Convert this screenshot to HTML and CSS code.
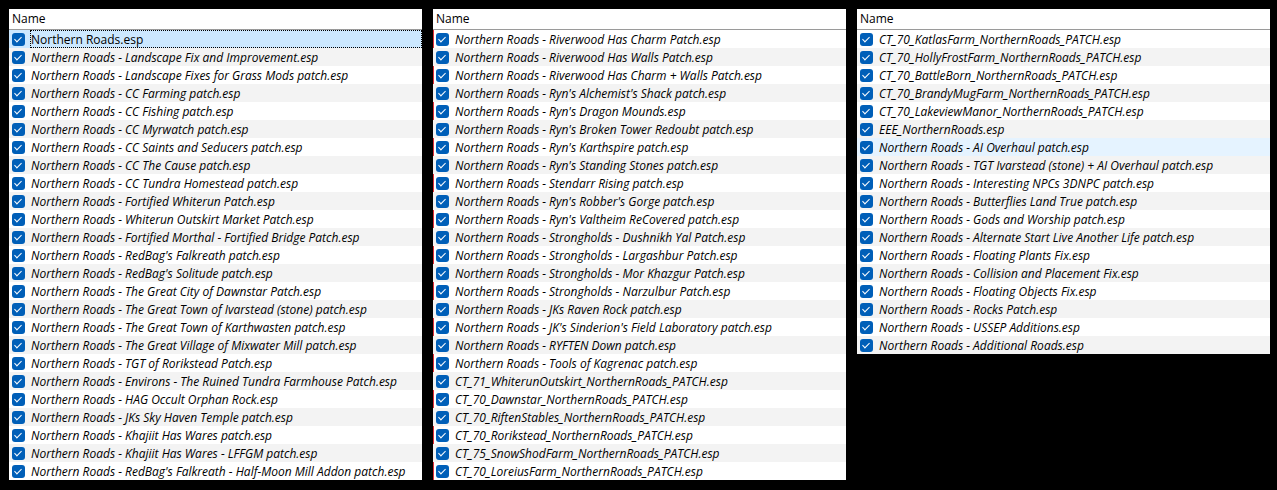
FILE: index.html
```html
<!doctype html>
<html>
<head>
<meta charset="utf-8">
<title>Plugins</title>
<link rel="stylesheet" href="styles.css">
</head>
<body>
<div class="wrap">
    <div class="panel">
        <div class="head">Name</div>
        <ul class="list">
            <li class="sel"><span class="cb"></span><span class="name plain">Northern Roads.esp</span></li>
            <li><span class="cb"></span><span class="name">Northern Roads - Landscape Fix and Improvement.esp</span></li>
            <li><span class="cb"></span><span class="name">Northern Roads - Landscape Fixes for Grass Mods patch.esp</span></li>
            <li><span class="cb"></span><span class="name">Northern Roads - CC Farming patch.esp</span></li>
            <li><span class="cb"></span><span class="name">Northern Roads - CC Fishing patch.esp</span></li>
            <li><span class="cb"></span><span class="name">Northern Roads - CC Myrwatch patch.esp</span></li>
            <li><span class="cb"></span><span class="name">Northern Roads - CC Saints and Seducers patch.esp</span></li>
            <li><span class="cb"></span><span class="name">Northern Roads - CC The Cause patch.esp</span></li>
            <li><span class="cb"></span><span class="name">Northern Roads - CC Tundra Homestead patch.esp</span></li>
            <li><span class="cb"></span><span class="name">Northern Roads - Fortified Whiterun Patch.esp</span></li>
            <li><span class="cb"></span><span class="name">Northern Roads - Whiterun Outskirt Market Patch.esp</span></li>
            <li><span class="cb"></span><span class="name">Northern Roads - Fortified Morthal - Fortified Bridge Patch.esp</span></li>
            <li><span class="cb"></span><span class="name">Northern Roads - RedBag's Falkreath patch.esp</span></li>
            <li><span class="cb"></span><span class="name">Northern Roads - RedBag's Solitude patch.esp</span></li>
            <li><span class="cb"></span><span class="name">Northern Roads - The Great City of Dawnstar Patch.esp</span></li>
            <li><span class="cb"></span><span class="name">Northern Roads - The Great Town of Ivarstead (stone) patch.esp</span></li>
            <li><span class="cb"></span><span class="name">Northern Roads - The Great Town of Karthwasten patch.esp</span></li>
            <li><span class="cb"></span><span class="name">Northern Roads - The Great Village of Mixwater Mill patch.esp</span></li>
            <li><span class="cb"></span><span class="name">Northern Roads - TGT of Rorikstead Patch.esp</span></li>
            <li><span class="cb"></span><span class="name">Northern Roads - Environs - The Ruined Tundra Farmhouse Patch.esp</span></li>
            <li><span class="cb"></span><span class="name">Northern Roads - HAG Occult Orphan Rock.esp</span></li>
            <li><span class="cb"></span><span class="name">Northern Roads - JKs Sky Haven Temple patch.esp</span></li>
            <li><span class="cb"></span><span class="name">Northern Roads - Khajiit Has Wares patch.esp</span></li>
            <li><span class="cb"></span><span class="name">Northern Roads - Khajiit Has Wares - LFFGM patch.esp</span></li>
            <li><span class="cb"></span><span class="name">Northern Roads - RedBag's Falkreath - Half-Moon Mill Addon patch.esp</span></li>
        </ul>
    </div>
    <div class="panel">
        <div class="head">Name</div>
        <ul class="list focus">
            <li><span class="cb"></span><span class="name">Northern Roads - Riverwood Has Charm Patch.esp</span></li>
            <li><span class="cb"></span><span class="name">Northern Roads - Riverwood Has Walls Patch.esp</span></li>
            <li><span class="cb"></span><span class="name">Northern Roads - Riverwood Has Charm + Walls Patch.esp</span></li>
            <li><span class="cb"></span><span class="name">Northern Roads - Ryn's Alchemist's Shack patch.esp</span></li>
            <li><span class="cb"></span><span class="name">Northern Roads - Ryn's Dragon Mounds.esp</span></li>
            <li><span class="cb"></span><span class="name">Northern Roads - Ryn's Broken Tower Redoubt patch.esp</span></li>
            <li><span class="cb"></span><span class="name">Northern Roads - Ryn's Karthspire patch.esp</span></li>
            <li><span class="cb"></span><span class="name">Northern Roads - Ryn's Standing Stones patch.esp</span></li>
            <li><span class="cb"></span><span class="name">Northern Roads - Stendarr Rising patch.esp</span></li>
            <li><span class="cb"></span><span class="name">Northern Roads - Ryn's Robber's Gorge patch.esp</span></li>
            <li><span class="cb"></span><span class="name">Northern Roads - Ryn's Valtheim ReCovered patch.esp</span></li>
            <li><span class="cb"></span><span class="name">Northern Roads - Strongholds - Dushnikh Yal Patch.esp</span></li>
            <li><span class="cb"></span><span class="name">Northern Roads - Strongholds - Largashbur Patch.esp</span></li>
            <li><span class="cb"></span><span class="name">Northern Roads - Strongholds - Mor Khazgur Patch.esp</span></li>
            <li><span class="cb"></span><span class="name">Northern Roads - Strongholds - Narzulbur Patch.esp</span></li>
            <li><span class="cb"></span><span class="name">Northern Roads - JKs Raven Rock patch.esp</span></li>
            <li><span class="cb"></span><span class="name">Northern Roads - JK's Sinderion's Field Laboratory patch.esp</span></li>
            <li><span class="cb"></span><span class="name">Northern Roads - RYFTEN Down patch.esp</span></li>
            <li><span class="cb"></span><span class="name">Northern Roads - Tools of Kagrenac patch.esp</span></li>
            <li><span class="cb"></span><span class="name">CT_71_WhiterunOutskirt_NorthernRoads_PATCH.esp</span></li>
            <li><span class="cb"></span><span class="name">CT_70_Dawnstar_NorthernRoads_PATCH.esp</span></li>
            <li><span class="cb"></span><span class="name">CT_70_RiftenStables_NorthernRoads_PATCH.esp</span></li>
            <li><span class="cb"></span><span class="name">CT_70_Rorikstead_NorthernRoads_PATCH.esp</span></li>
            <li><span class="cb"></span><span class="name">CT_75_SnowShodFarm_NorthernRoads_PATCH.esp</span></li>
            <li><span class="cb"></span><span class="name">CT_70_LoreiusFarm_NorthernRoads_PATCH.esp</span></li>
        </ul>
    </div>
    <div class="panel">
        <div class="head">Name</div>
        <ul class="list">
            <li><span class="cb"></span><span class="name">CT_70_KatlasFarm_NorthernRoads_PATCH.esp</span></li>
            <li><span class="cb"></span><span class="name">CT_70_HollyFrostFarm_NorthernRoads_PATCH.esp</span></li>
            <li><span class="cb"></span><span class="name">CT_70_BattleBorn_NorthernRoads_PATCH.esp</span></li>
            <li><span class="cb"></span><span class="name">CT_70_BrandyMugFarm_NorthernRoads_PATCH.esp</span></li>
            <li><span class="cb"></span><span class="name">CT_70_LakeviewManor_NorthernRoads_PATCH.esp</span></li>
            <li><span class="cb"></span><span class="name">EEE_NorthernRoads.esp</span></li>
            <li class="hover"><span class="cb"></span><span class="name">Northern Roads - AI Overhaul patch.esp</span></li>
            <li><span class="cb"></span><span class="name">Northern Roads - TGT Ivarstead (stone) + AI Overhaul patch.esp</span></li>
            <li><span class="cb"></span><span class="name">Northern Roads - Interesting NPCs 3DNPC patch.esp</span></li>
            <li><span class="cb"></span><span class="name">Northern Roads - Butterflies Land True patch.esp</span></li>
            <li><span class="cb"></span><span class="name">Northern Roads - Gods and Worship patch.esp</span></li>
            <li><span class="cb"></span><span class="name">Northern Roads - Alternate Start Live Another Life patch.esp</span></li>
            <li><span class="cb"></span><span class="name">Northern Roads - Floating Plants Fix.esp</span></li>
            <li><span class="cb"></span><span class="name">Northern Roads - Collision and Placement Fix.esp</span></li>
            <li><span class="cb"></span><span class="name">Northern Roads - Floating Objects Fix.esp</span></li>
            <li><span class="cb"></span><span class="name">Northern Roads - Rocks Patch.esp</span></li>
            <li><span class="cb"></span><span class="name">Northern Roads - USSEP Additions.esp</span></li>
            <li><span class="cb"></span><span class="name">Northern Roads - Additional Roads.esp</span></li>
        </ul>
    </div>
</div>
</body>
</html>
```
FILE: styles.css
```css
body,div,ul,li{margin:0;padding:0;}
ul{list-style-type:none;}
body{background:#000;font:12px/18px "Open Sans","Liberation Sans",sans-serif;color:#000;}
.wrap{display:flex;align-items:flex-start;gap:11px;padding:9px 7px 0 9px;}
.panel{width:413px;background:#fff;}
.head{height:20px;line-height:20px;padding-left:3px;border-bottom:1px solid #9a9a9a;}
.list li{display:flex;align-items:center;height:18px;}
.list li:nth-child(even){background:#f3f3f3;}
.list li.sel{background:#cce8ff;}
.list li.hover{background:#e5f3ff;}
.list.focus{box-shadow:inset 1px 0 0 #e0313a;}
.cb{position:relative;flex:none;width:13px;height:13px;margin:1px 5px 0 3px;background:#005fb8;border-radius:3px;}
.cb::after{content:"";position:absolute;left:4px;top:2px;width:3px;height:6px;border:solid #fff;border-width:0 1px 1px 0;transform:rotate(45deg);}
.name{flex:1;box-sizing:border-box;height:18px;padding:1px 0 0 1px;font-style:italic;white-space:nowrap;}
.name.plain{font-style:normal;}
.sel .name{outline:1px dotted #000;outline-offset:-1px;}
```
